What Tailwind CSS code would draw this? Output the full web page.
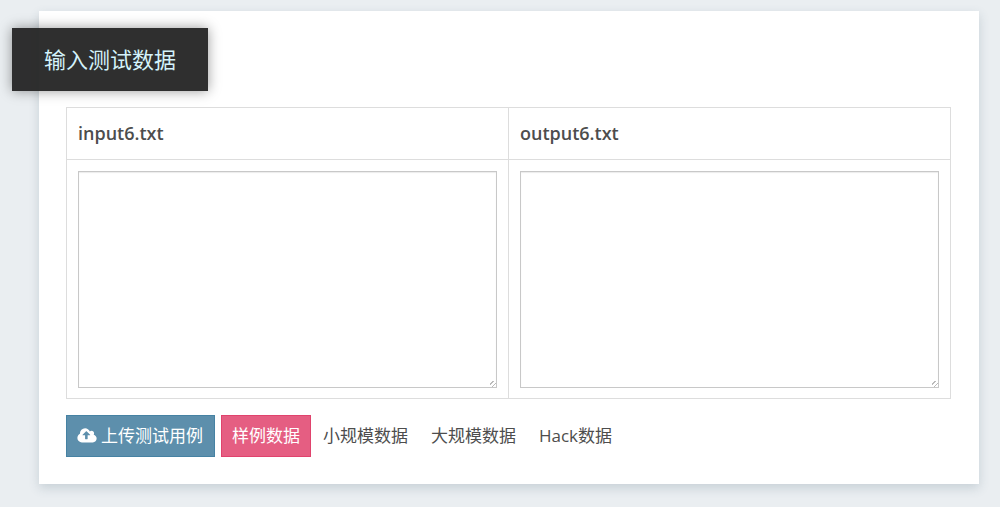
<!DOCTYPE html>
<html lang="zh-CN">
<head>
<meta charset="utf-8">
<meta name="viewport" content="width=device-width, initial-scale=1">
<title>输入测试数据</title>
<script src="https://cdn.jsdelivr.net/npm/@tailwindcss/browser@4"></script>
</head>
<body class="min-h-screen bg-[#eaeef1] pt-[11px] pr-[21px] pb-[22px] pl-[39px] text-[17px] text-[#4d4d4d] font-['Open_Sans','Noto_Sans_CJK_SC',sans-serif]">
<main class="bg-white pt-[17px] pr-7 pb-[27px] pl-[27px] shadow-[0_4px_10px_rgba(60,90,110,0.2)]">
  <h1 class="-ml-[54px] mb-4 w-fit bg-[#222222]/94 px-8 py-4 text-[22px] leading-[31px] text-[#d4f3fb] shadow-[0_0_12px_rgba(0,0,0,0.4)]">输入测试数据</h1>
  <form>
    <table class="w-full table-fixed border-collapse">
      <thead class="text-lg">
        <tr>
          <th class="border border-[#dddddd] px-[11px] py-3 text-left leading-[27px] font-semibold" scope="col"><label for="input">input6.txt</label></th>
          <th class="border border-[#dddddd] px-[11px] py-3 text-left leading-[27px] font-semibold" scope="col"><label for="output">output6.txt</label></th>
        </tr>
      </thead>
      <tbody>
        <tr>
          <td class="border border-[#dddddd] px-[11px] pt-[11px] pb-[10px]"><textarea id="input" class="block h-[217px] w-full border border-[#c8c8c8] bg-white p-2 shadow-[inset_0_1px_1px_rgba(0,0,0,0.08)] [&::-webkit-resizer]:bg-[repeating-linear-gradient(135deg,#ffffff_0px,#ffffff_2px,#bbbbbb_2px,#bbbbbb_3px)] [&::-webkit-resizer]:bg-[length:6px_6px] [&::-webkit-resizer]:bg-no-repeat [&::-webkit-resizer]:bg-[position:right_bottom]"></textarea></td>
          <td class="border border-[#dddddd] px-[11px] pt-[11px] pb-[10px]"><textarea id="output" class="block h-[217px] w-full border border-[#c8c8c8] bg-white p-2 shadow-[inset_0_1px_1px_rgba(0,0,0,0.08)] [&::-webkit-resizer]:bg-[repeating-linear-gradient(135deg,#ffffff_0px,#ffffff_2px,#bbbbbb_2px,#bbbbbb_3px)] [&::-webkit-resizer]:bg-[length:6px_6px] [&::-webkit-resizer]:bg-no-repeat [&::-webkit-resizer]:bg-[position:right_bottom]"></textarea></td>
        </tr>
      </tbody>
    </table>
    <div class="mt-4 flex flex-wrap gap-px leading-[26px]">
      <button type="button" class="mr-[5px] flex items-center gap-1 border border-[#4682a3] bg-[#5d8fac] py-[7px] pr-[11px] pl-[10px] text-white">
        <svg class="h-[18px] w-5" viewBox="0 0 1920 1792" fill="currentColor" aria-hidden="true"><path d="M1280 800q0-14-9-23l-352-352q-9-9-23-9t-23 9l-351 351q-10 12-10 24 0 14 9 23t23 9h224v352q0 13 9.500 22.500t22.500 9.500h192q13 0 22.500-9.500t9.500-22.500v-352h224q13 0 22.500-9.500t9.500-22.500zm640 352q0 159-112.500 271.500t-271.500 112.500h-1088q-185 0-316.500-131.500t-131.500-316.500q0-130 70-240t188-165q-2-30-2-43 0-212 150-362t362-150q156 0 285.500 87t188.500 231q71-62 166-62 106 0 181 75t75 181q0 76-41 138 130 31 213.500 135.500t83.500 238.500z"/></svg>
        上传测试用例
      </button>
      <button type="button" class="border border-[#e0436d] bg-[#e55e82] px-[10px] py-[7px] text-white">样例数据</button>
      <button type="button" class="px-[11px] py-2">小规模数据</button>
      <button type="button" class="px-[11px] py-2">大规模数据</button>
      <button type="button" class="px-[11px] py-2">Hack数据</button>
    </div>
  </form>
</main>
</body>
</html>
